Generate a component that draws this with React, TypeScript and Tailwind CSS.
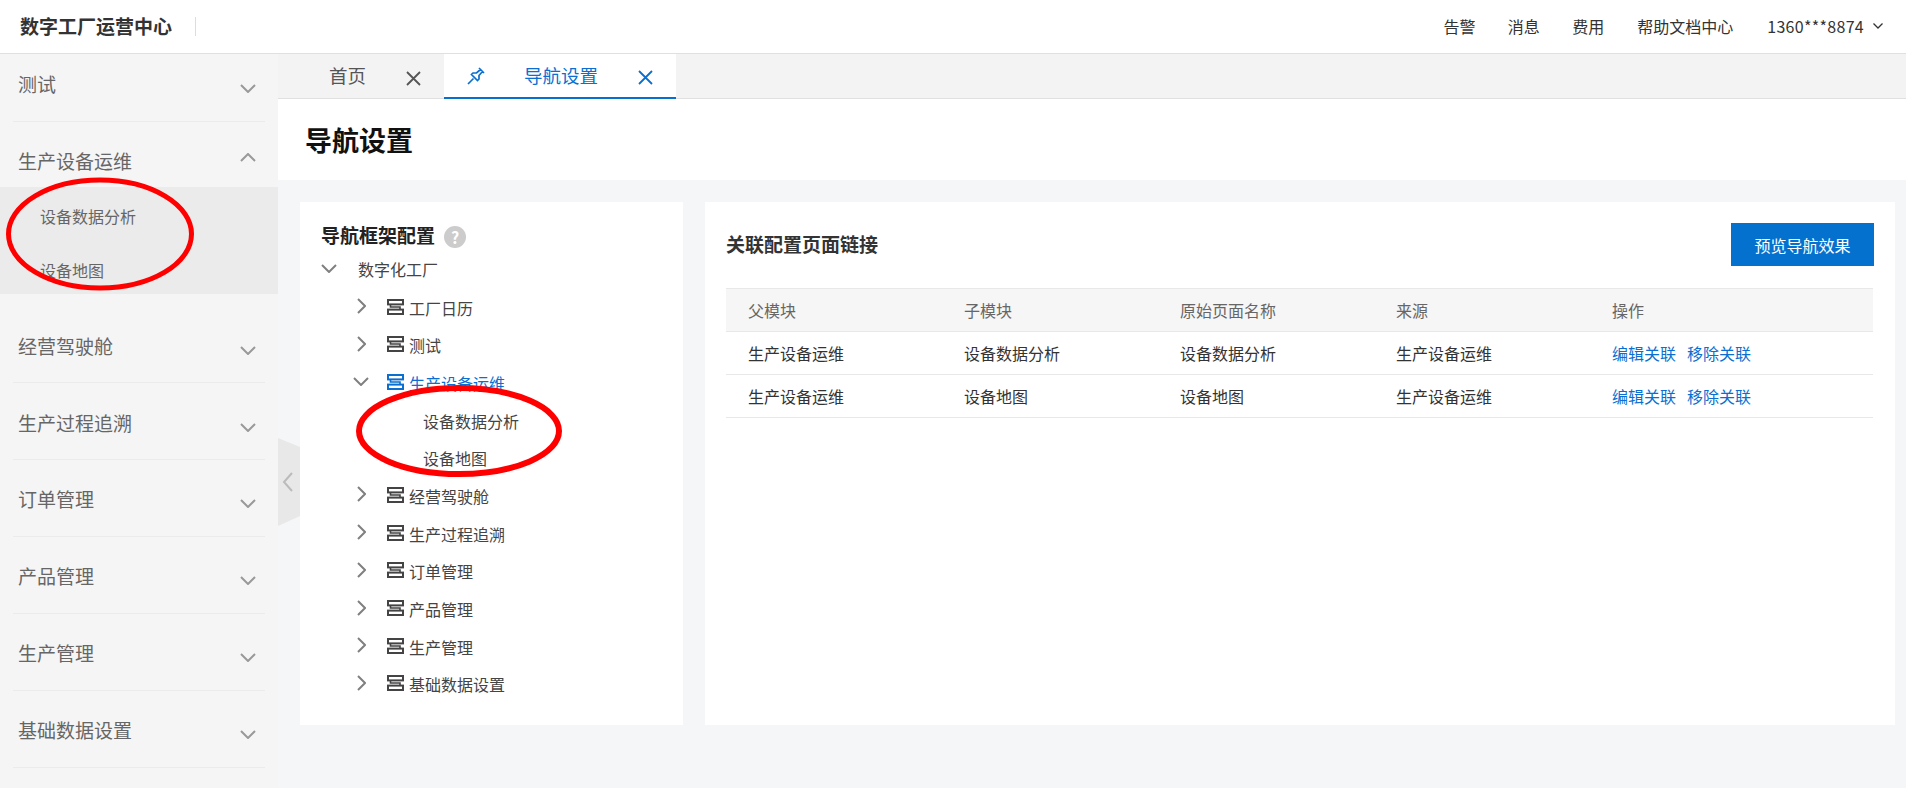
import React from "react";

const FONT = "font-['Noto_Sans_CJK_SC','Microsoft_YaHei',sans-serif]";

const ChevronDown = ({ className = "" }: { className?: string }) => (
  <svg width="16" height="9" viewBox="0 0 16 9" fill="none" stroke="currentColor" strokeWidth="2" className={className}>
    <path d="M1 1l7 7 7-7" />
  </svg>
);

const ChevronUp = ({ className = "" }: { className?: string }) => (
  <svg width="16" height="9" viewBox="0 0 16 9" fill="none" stroke="currentColor" strokeWidth="2" className={className}>
    <path d="M1 8l7-7 7 7" />
  </svg>
);

const ChevronRight = ({ className = "" }: { className?: string }) => (
  <svg width="9" height="16" viewBox="0 0 9 16" fill="none" stroke="currentColor" strokeWidth="2" className={className}>
    <path d="M1 1l7 7-7 7" />
  </svg>
);

const Close = ({ className = "" }: { className?: string }) => (
  <svg width="15" height="15" viewBox="0 0 15 15" fill="none" stroke="currentColor" strokeWidth="1.8" className={className}>
    <path d="M1 1l13 13M14 1L1 14" />
  </svg>
);

const NodeIcon = ({ className = "" }: { className?: string }) => (
  <svg width="17" height="16" viewBox="0 0 17 16" fill="none" stroke="currentColor" strokeWidth="2" className={className}>
    <rect x="1" y="1" width="15" height="4.4" />
    <rect x="1" y="10.6" width="15" height="4.4" />
    <path d="M3.5 5.4v2.6h9.5v2.6" strokeWidth="1.6" />
  </svg>
);

type SideItem = { label: string; box: string };

const topItems: SideItem[] = [{ label: "测试", box: "h-[68px] pt-[17px]" }];

const bottomItems: SideItem[] = [
  { label: "经营驾驶舱", box: "h-[89px] pt-[39px]" },
  { label: "生产过程追溯", box: "h-[77px] pt-[27px]" },
  { label: "订单管理", box: "h-[77px] pt-[26px]" },
  { label: "产品管理", box: "h-[77px] pt-[26px]" },
  { label: "生产管理", box: "h-[77px] pt-[26px]" },
  { label: "基础数据设置", box: "h-[77px] pt-[26px]" },
];

const SideRow = ({ item }: { item: SideItem }) => (
  <div className={`mx-[13px] flex items-start justify-between border-b border-[#ebebeb] pl-[5px] pr-[9px] ${item.box}`}>
    <span className="text-[19px] leading-[26px] text-[#666]">{item.label}</span>
    <ChevronDown className="mt-[13px] text-[#999]" />
  </div>
);

const Sidebar = () => (
  <aside className="w-[278px] shrink-0 bg-[#f5f5f5]">
    {topItems.map((item) => (
      <SideRow key={item.label} item={item} />
    ))}
    <div className="mx-[13px] flex h-[65px] items-start justify-between pl-[5px] pr-[9px] pt-[26px]">
      <span className="text-[19px] leading-[26px] text-[#666]">生产设备运维</span>
      <ChevronUp className="mt-[5px] text-[#999]" />
    </div>
    <div className="h-[107px] bg-[#ebebeb] pl-[40px] text-[16px] text-[#666]">
      <div className="flex h-[58px] items-center">设备数据分析</div>
      <div className="flex h-[49px] items-center">设备地图</div>
    </div>
    {bottomItems.map((item) => (
      <SideRow key={item.label} item={item} />
    ))}
  </aside>
);

const treeItems = ["经营驾驶舱", "生产过程追溯", "订单管理", "产品管理", "生产管理", "基础数据设置"];

const TreeRow = ({ label, open, active }: { label: string; open?: boolean; active?: boolean }) => (
  <div className={`flex h-[37.7px] items-center pl-[31px] text-[16px] ${active ? "text-[#0a6fd0]" : "text-[#444]"}`}>
    <span className="flex w-[16px] justify-center text-[#808080]">
      {open ? <ChevronDown className="mb-[2px]" /> : <ChevronRight className="mb-[3px]" />}
    </span>
    <NodeIcon className="mb-[2px] ml-[18px]" />
    <span className="ml-[5px]">{label}</span>
  </div>
);

const TreeCard = () => (
  <section className="w-[383px] shrink-0 bg-white pl-[22px] pt-[20px]">
    <div className="mb-[2px] -ml-px flex h-[26px] items-center">
      <span className="text-[19px] font-bold leading-[26px] text-[#222]">导航框架配置</span>
      <span className="ml-[9px] mt-[3px] flex h-[22px] w-[22px] items-center justify-center rounded-full bg-[#ccc] text-[16px] font-bold text-white">
        ?
      </span>
    </div>
    <div className="flex h-[37.7px] items-center text-[16px] text-[#444]">
      <ChevronDown className="-ml-px text-[#808080]" />
      <span className="ml-[21px]">数字化工厂</span>
    </div>
    <div className="mt-px">
      <TreeRow label="工厂日历" />
      <TreeRow label="测试" />
      <TreeRow label="生产设备运维" open active />
      <div className="flex h-[37.7px] items-center pl-[101px] text-[16px] text-[#444]">设备数据分析</div>
      <div className="flex h-[37.7px] items-center pl-[101px] text-[16px] text-[#444]">设备地图</div>
      {treeItems.map((label) => (
        <TreeRow key={label} label={label} />
      ))}
    </div>
  </section>
);

const columns = ["父模块", "子模块", "原始页面名称", "来源", "操作"];
const rows = [
  ["生产设备运维", "设备数据分析", "设备数据分析", "生产设备运维"],
  ["生产设备运维", "设备地图", "设备地图", "生产设备运维"],
];
const gridCols = "grid h-[43px] grid-cols-[216px_216px_216px_216px_1fr] items-center border-b border-[#e8e8e8] pl-[22px] text-[16px]";

const LinkCard = () => (
  <section className="flex-1 bg-white pl-[21px] pr-[22px] pt-[21px]">
    <div className="flex items-center justify-between">
      <h2 className="text-[19px] font-bold text-[#333]">关联配置页面链接</h2>
      <button className="-mr-px h-[43px] w-[143px] bg-[#0571cf] text-[16px] text-white">预览导航效果</button>
    </div>
    <div className="mt-[22px] border-t border-[#e8e8e8]">
      <div className={`${gridCols} bg-[#f6f6f6] text-[#666]`}>
        {columns.map((c) => (
          <span key={c}>{c}</span>
        ))}
      </div>
      {rows.map((row, i) => (
        <div key={i} className={`${gridCols} text-[#333]`}>
          {row.map((cell, j) => (
            <span key={j}>{cell}</span>
          ))}
          <span className="flex gap-[11px] text-[#0a6fd0]">
            <a>编辑关联</a>
            <a>移除关联</a>
          </span>
        </div>
      ))}
    </div>
  </section>
);

export default function App() {
  return (
    <div className={`relative flex h-[788px] flex-col overflow-hidden bg-white ${FONT}`}>
      <header className="flex h-[54px] shrink-0 items-center justify-between border-b border-[#e0e0e0] bg-white pb-[11px] pl-[20px] pr-[23px] pt-[10px]">
        <div className="flex items-center">
          <span className="text-[19px] font-bold text-[#333]">数字工厂运营中心</span>
          <span className="ml-[23px] h-[19px] w-px bg-[#ddd]" />
        </div>
        <nav className="flex items-center text-[16px] text-[#333]">
          <span>告警</span>
          <span className="ml-[32.4px]">消息</span>
          <span className="ml-[32.4px]">费用</span>
          <span className="ml-[33px]">帮助文档中心</span>
          <span className="ml-[34px] tracking-[0.3px]">1360***8874</span>
          <svg width="10" height="6" viewBox="0 0 10 6" fill="none" stroke="currentColor" strokeWidth="1.3" className="ml-[9px]">
            <path d="M.5.5L5 5 9.5.5" />
          </svg>
        </nav>
      </header>

      <div className="flex flex-1">
        <Sidebar />

        <main className="flex flex-1 flex-col bg-[#f5f6f8]">
          <div className="flex h-[45px] shrink-0 border-b border-[#e0e0e0] bg-[#f3f3f3]">
            <div className="flex h-[44px] w-[166px] items-center pl-[51px] text-[18.5px] text-[#555]">
              <span>首页</span>
              <Close className="ml-[40px] mt-[4px]" />
            </div>
            <div className="flex h-[45px] w-[232px] items-center border-b-[2px] border-[#0571cf] bg-white pl-[23px] text-[18.5px] text-[#0a6fd0]">
              <svg width="18" height="18" viewBox="0 0 18 18" fill="none" stroke="currentColor" strokeWidth="1.7" className="shrink-0">
                <path d="M1 17l5.5-5.5M12 1l5 5M13.5 2.5L9.5 6H6L4.5 7.5l6 6L12 12V8.5l3.5-4" />
              </svg>
              <span className="ml-[39px]">导航设置</span>
              <Close className="ml-[40px] mt-[4px]" />
            </div>
          </div>

          <div className="flex h-[81px] shrink-0 items-center bg-white pl-[27px] pt-px text-[27px] font-bold text-[#111]">导航设置</div>

          <div className="flex h-[523px] gap-[22px] ml-[22px] mr-[11px] mt-[22px]">
            <TreeCard />
            <LinkCard />
          </div>
        </main>
      </div>

      {/* 折叠把手 */}
      <svg width="22" height="88" viewBox="0 0 22 88" className="absolute left-[278px] top-[438px]">
        <path d="M0 0l22 9v69L0 88z" fill="#e8e8e8" />
        <path d="M14 35l-8 9 8 9" fill="none" stroke="#bbb" strokeWidth="2" />
      </svg>

      {/* 红色标注圈 */}
      <svg width="188" height="114" viewBox="0 0 188 114" fill="none" className="absolute left-[6px] top-[177px]">
        <ellipse cx="94" cy="57" rx="91.5" ry="54" stroke="#f00" strokeWidth="5" />
      </svg>
      <svg width="206" height="92" viewBox="0 0 206 92" fill="none" className="absolute left-[356px] top-[385px]">
        <ellipse cx="103" cy="46" rx="100" ry="43" stroke="#f00" strokeWidth="6" />
      </svg>
    </div>
  );
}
